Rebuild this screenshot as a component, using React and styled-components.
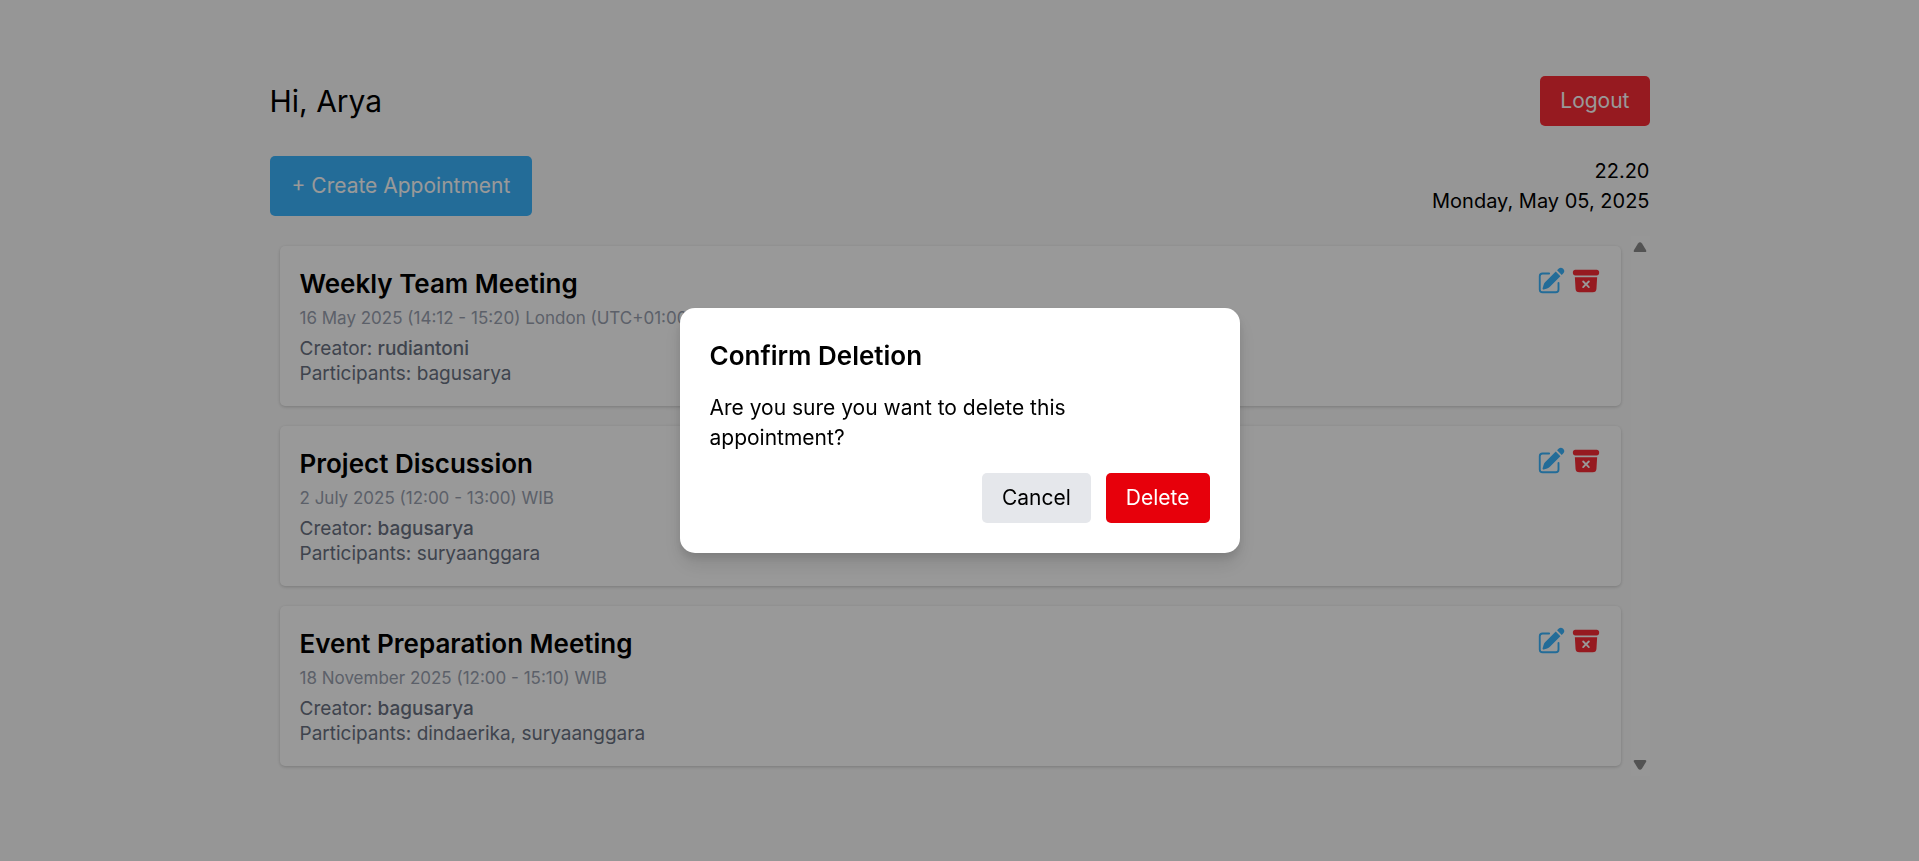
import React from "react";
import styled, { createGlobalStyle } from "styled-components";
import { HiPencilSquare, HiArchiveBoxXMark } from "react-icons/hi2";

const GlobalStyle = createGlobalStyle`
  *, *::before, *::after { box-sizing: border-box; }
  body {
    margin: 0;
    background: #fbfbfb;
    color: #000;
    font-family: Inter, "Open Sans", sans-serif;
    font-size: 21px;
    line-height: 30px;
  }
  h1, h2, p { margin: 0; font-weight: 400; }
  button { border: 0; font: inherit; cursor: pointer; }
`;

const Page = styled.main`
  display: flex;
  flex-direction: column;
  gap: 20px;
  width: 72%;
  max-width: 1380px;
  margin: 0 auto;
  padding: 76px 0 80px;
`;

const Bar = styled.header`
  display: flex;
  align-items: center;
  justify-content: space-between;
`;

const Greeting = styled.h1`
  font-size: 30px;
  line-height: 40px;
`;

const buttonTones = {
  danger: { background: "#fb2c36", color: "#fff" },
  confirm: { background: "#e7000b", color: "#fff" },
  primary: { background: "#3bb4fd", color: "#fff" },
  neutral: { background: "#e5e7eb", color: "#000" },
};

const Button = styled.button`
  padding: ${({ $large }) => ($large ? "15px 22px" : "10px 20px")};
  border-radius: 5px;
  background: ${({ $tone }) => buttonTones[$tone].background};
  color: ${({ $tone }) => buttonTones[$tone].color};
`;

const Toolbar = styled(Bar).attrs({ as: "div" })`
  margin-top: 10px;
`;

const Clock = styled.div`
  font-size: 20px;
  text-align: right;
`;

const ListFrame = styled.section`
  display: flex;
`;

const List = styled.ul`
  flex: 1;
  display: flex;
  flex-direction: column;
  gap: 20px;
  margin: 0;
  padding: 10px;
  list-style: none;
`;

const Card = styled.li`
  display: flex;
  justify-content: space-between;
  align-items: flex-start;
  padding: 20px;
  border-radius: 5px;
  background: #fff;
  box-shadow: 0 1px 4px rgba(0, 0, 0, 0.1), 0 1px 3px rgba(0, 0, 0, 0.1);
`;

const CardTitle = styled.h2`
  font-size: 26px;
  line-height: 35px;
  font-weight: 600;
`;

const When = styled.p`
  margin: 5px 0;
  font-size: 17px;
  line-height: 25px;
  color: #99a1af;
`;

const Detail = styled.p`
  font-size: 19px;
  line-height: 25px;
  color: #6a7282;
`;

const Name = styled.span`
  font-weight: 500;
`;

const Actions = styled.div`
  display: flex;
  gap: 5px;
`;

const IconButton = styled.button`
  display: flex;
  padding: 0;
  background: none;
  color: ${({ $danger }) => ($danger ? "#fb2c36" : "#3bb4fd")};
`;

const ScrollTrack = styled.div`
  width: 19px;
  display: flex;
  flex-direction: column;
  align-items: center;
  justify-content: space-between;
  padding: 5px 0;
  background: #fcfcfc;
`;

const Overlay = styled.div`
  position: fixed;
  inset: 0;
  display: flex;
  align-items: center;
  justify-content: center;
  background: rgba(0, 0, 0, 0.4);
`;

const Dialog = styled.div`
  width: 560px;
  max-width: 90%;
  display: flex;
  flex-direction: column;
  gap: 20px;
  padding: 30px;
  border-radius: 15px;
  background: #fff;
  box-shadow: 0 12px 20px rgba(0, 0, 0, 0.1), 0 5px 8px rgba(0, 0, 0, 0.1);
`;

const Message = styled.p`
  max-width: 400px;
`;

const DialogActions = styled.div`
  display: flex;
  justify-content: flex-end;
  gap: 15px;
`;

const appointments = [
  {
    title: "Weekly Team Meeting",
    when: "16 May 2025 (14:12 - 15:20) London (UTC+01:00)",
    creator: "rudiantoni",
    participants: "bagusarya",
  },
  {
    title: "Project Discussion",
    when: "2 July 2025 (12:00 - 13:00) WIB",
    creator: "bagusarya",
    participants: "suryaanggara",
  },
  {
    title: "Event Preparation Meeting",
    when: "18 November 2025 (12:00 - 15:10) WIB",
    creator: "bagusarya",
    participants: "dindaerika, suryaanggara",
  },
];

function ScrollArrow({ down }) {
  return (
    <svg width="14" height="12" viewBox="0 0 14 12" aria-hidden="true">
      <path
        d={
          down
            ? "M2 1H12Q14 1 13 3L9 9.500Q7 12 5 9.500L1 3Q0 1 2 1Z"
            : "M2 11H12Q14 11 13 9L9 2.500Q7 0 5 2.500L1 9Q0 11 2 11Z"
        }
        fill="#8b8b8b"
      />
    </svg>
  );
}

function AppointmentCard({ title, when, creator, participants }) {
  return (
    <Card>
      <div>
        <CardTitle>{title}</CardTitle>
        <When>{when}</When>
        <Detail>
          Creator: <Name>{creator}</Name>
        </Detail>
        <Detail>Participants: {participants}</Detail>
      </div>
      <Actions>
        <IconButton type="button" aria-label={`Edit ${title}`}>
          <HiPencilSquare size={30} />
        </IconButton>
        <IconButton type="button" $danger aria-label={`Delete ${title}`}>
          <HiArchiveBoxXMark size={30} />
        </IconButton>
      </Actions>
    </Card>
  );
}

export default function App() {
  return (
    <>
      <GlobalStyle />
      <Page>
        <Bar>
          <Greeting>Hi, Arya</Greeting>
          <Button type="button" $tone="danger">Logout</Button>
        </Bar>
        <Toolbar>
          <Button type="button" $tone="primary" $large>+ Create Appointment</Button>
          <Clock>
            <p>22.20</p>
            <p>Monday, May 05, 2025</p>
          </Clock>
        </Toolbar>
        <ListFrame>
          <List>
            {appointments.map((item) => (
              <AppointmentCard key={item.title} {...item} />
            ))}
          </List>
          <ScrollTrack>
            <ScrollArrow />
            <ScrollArrow down />
          </ScrollTrack>
        </ListFrame>
      </Page>
      <Overlay>
        <Dialog role="dialog" aria-modal="true" aria-labelledby="confirm-title">
          <CardTitle id="confirm-title">Confirm Deletion</CardTitle>
          <Message>Are you sure you want to delete this appointment?</Message>
          <DialogActions>
            <Button type="button" $tone="neutral">Cancel</Button>
            <Button type="button" $tone="confirm">Delete</Button>
          </DialogActions>
        </Dialog>
      </Overlay>
    </>
  );
}
